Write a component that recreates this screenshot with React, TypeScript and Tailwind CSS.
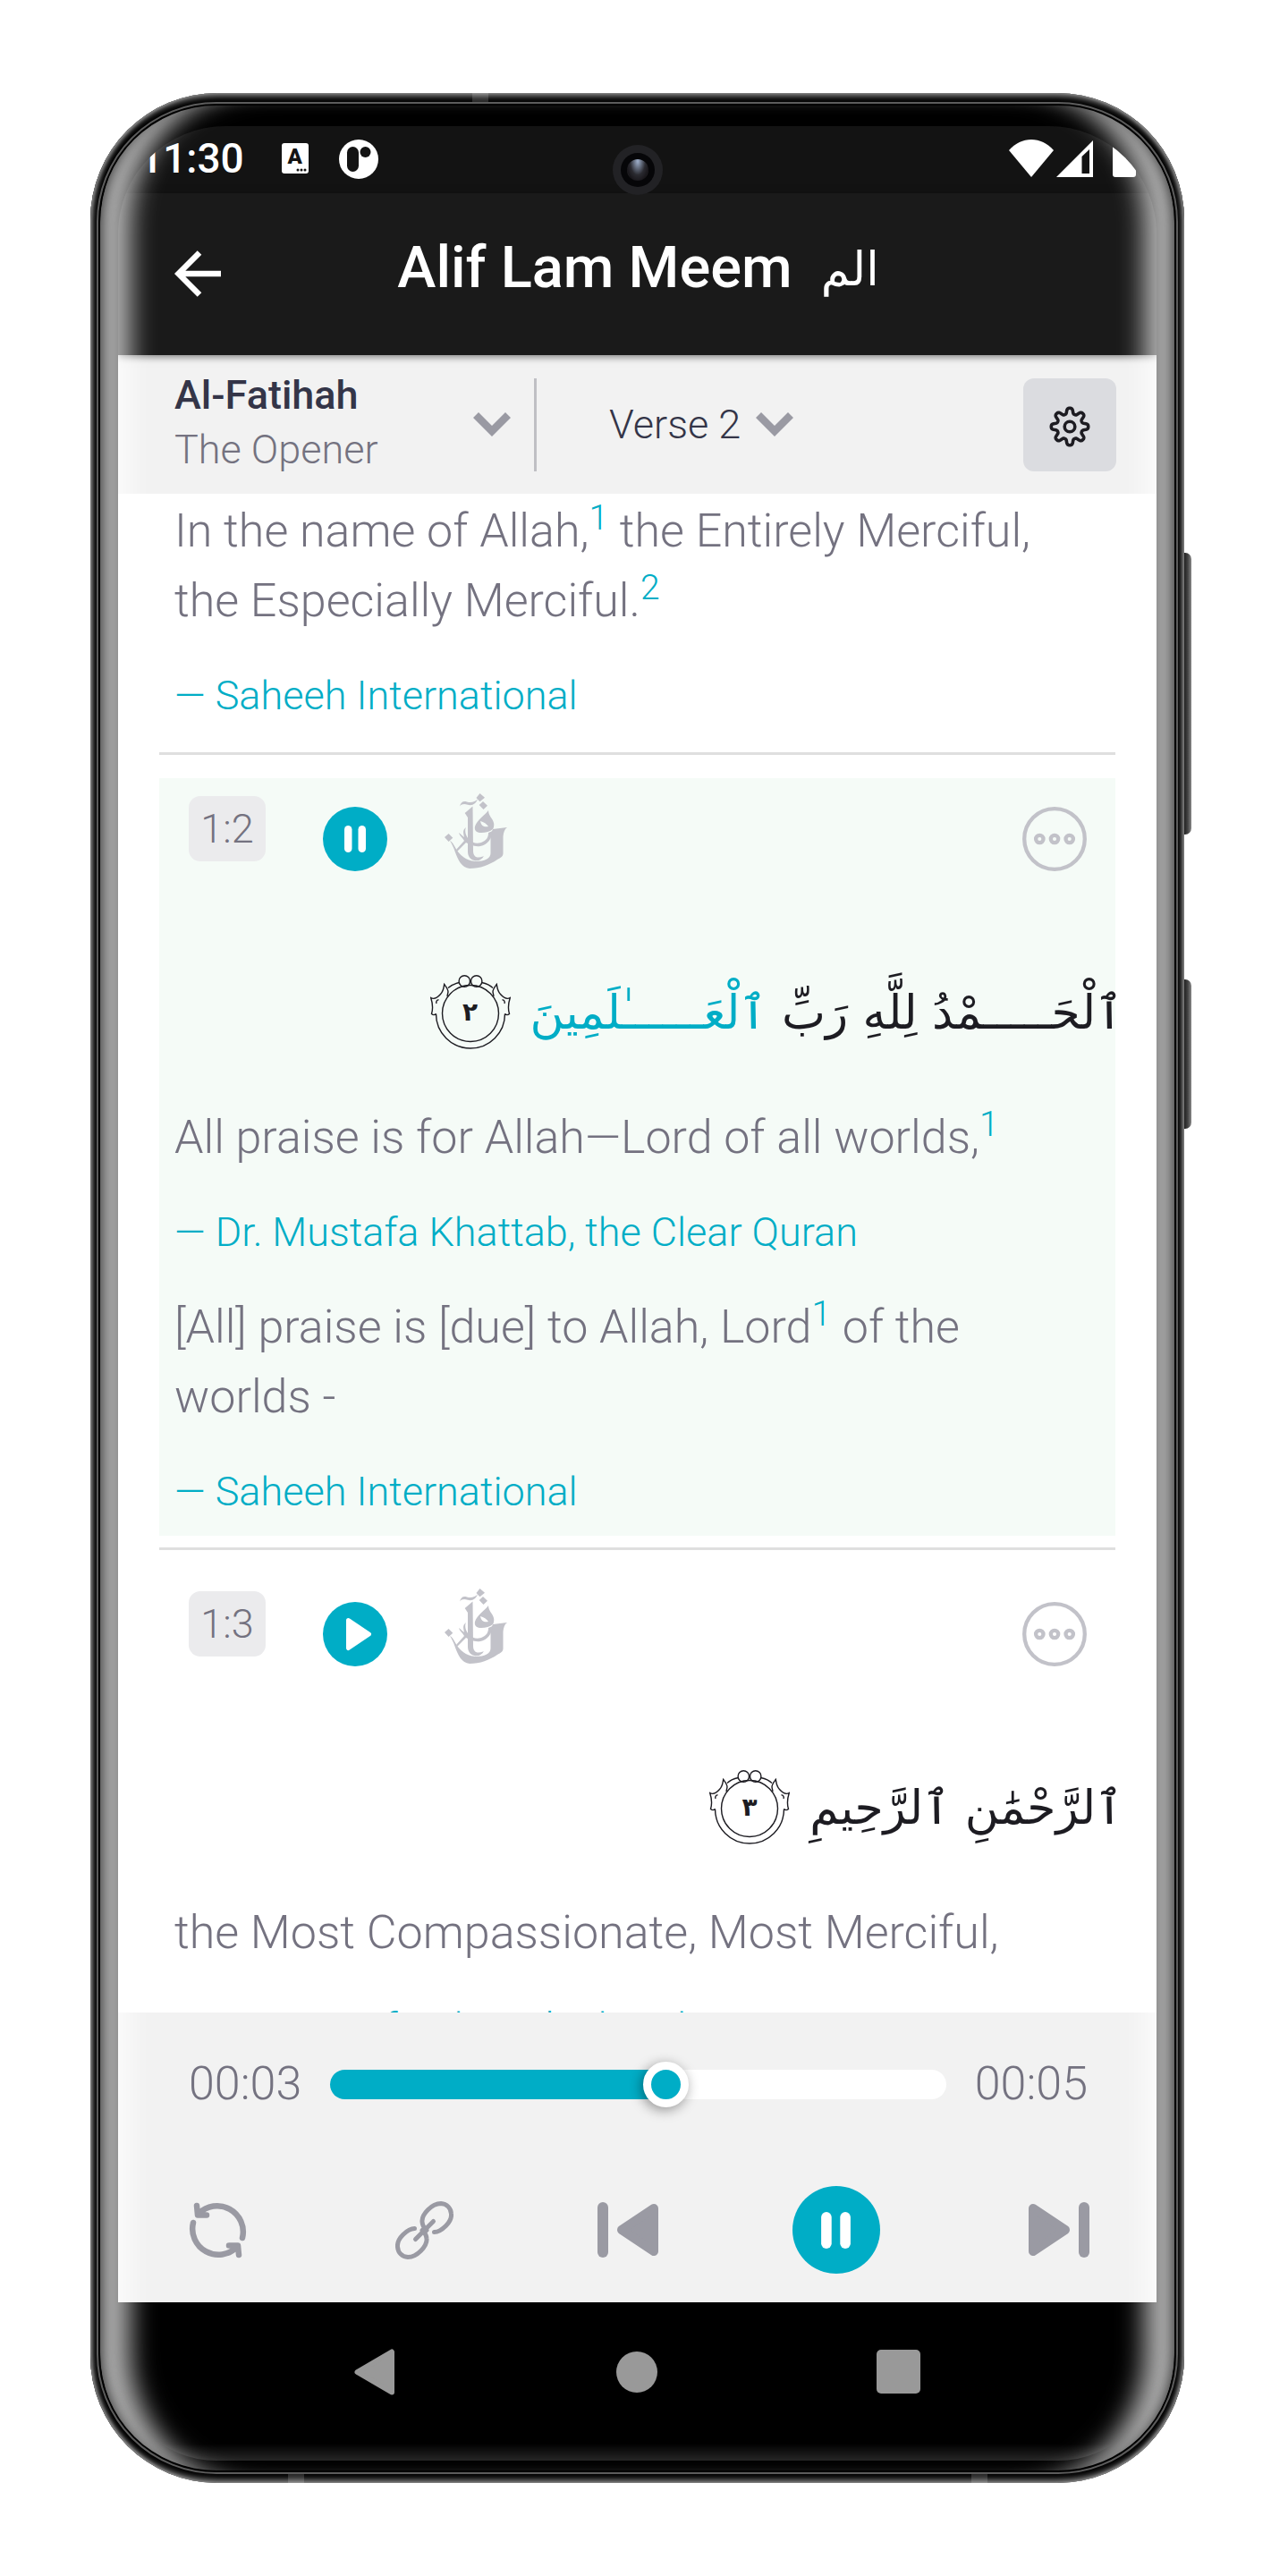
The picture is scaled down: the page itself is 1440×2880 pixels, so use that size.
import React, { useState } from "react";

const TRANSLATOR = "text-[45px] leading-[54px] font-light text-[#00adc6]";
const BODY = "text-[52px] leading-[78px] font-light text-[#747280]";

function Note({ n }: { n: number }) {
  return <sup className="text-[#00adc6]">{n}</sup>;
}

function Chevron() {
  return (
    <svg viewBox="0 0 42 27" className="w-[42px] h-[27px] shrink-0" aria-hidden="true">
      <path d="M3 3 21 21 39 3" fill="none" stroke="#9a9aa3" strokeWidth="8.5" />
    </svg>
  );
}

// Eight rounded teeth: the wave is flattened at its peaks and valleys.
function gearPath() {
  const pts: string[] = [];
  for (let i = 0; i < 240; i++) {
    const a = (i / 240) * Math.PI * 2;
    const r = 17.6 + 3.1 * (Math.tanh(1.7 * Math.cos(8 * a)) / Math.tanh(1.7));
    pts.push(`${(24 + r * Math.sin(a)).toFixed(2)} ${(24 - r * Math.cos(a)).toFixed(2)}`);
  }
  return `M${pts.join("L")}Z`;
}

function Gear() {
  return (
    <svg viewBox="0 0 48 48" className="mt-1 size-12" fill="none" stroke="#1d1c22" strokeWidth="3.6" strokeLinejoin="round" aria-hidden="true">
      <path d={gearPath()} />
      <circle cx="24" cy="24" r="5.8" />
    </svg>
  );
}

function Calligraphy() {
  return (
    <svg viewBox="0 0 70 84" className="w-[70px] h-[84px]" fill="#c2c2c9" aria-hidden="true">
      <path d="M39.5 0 45 4.7 39.5 9.3 35.5 5Z" />
      <path d="M43 9 48 13.7 43.5 18 38.7 13Z" />
      <path d="M4.6 45 9.3 49.7 4.6 54 0 49Z" />
      <path d="M17 14.5C18 10 21 8 25 9.5C30 11 34 9.5 37 6.5C35.5 11 31 14.5 26 12.8C22 11.5 19 12 17 14.5Z" />
      <path d="M22.7 22 31.5 14.5 32 64C32 69 34.5 72 38.5 71.5C41.5 71 43 70.5 44 70C42 74 38 76 33.5 75C28.5 74 26 70 26 65V27Z" />
      <path d="M49 19C45.5 24 36 30 34 37C33 42 36 44 41 44C46 44 51 42.5 54 40L70 38C67 40 66 44 65.5 48V67C65.5 71 62 72 59 74C50 80 40 84 28 84C19 83 15 74 12 66C10 60 8 56 6 53C9 54 11 59 14 64C20 72 27 76 36 76C44 76 51.5 73 51.5 67V44C54 41 56 37 55 33C54 28 49 25 49 19ZM40 31C44 32 47 34 49 37C45 38 41 37 40 31Z" fillRule="evenodd" />
      <path d="M24 38C22 42 24 48 27 51C31 56 38 57 43 54C47 52 49 49 49 44L54 42C53 50 48 58 40 59C33 60 28 57 24 55L14 65L13 63L22 53C20 49 17 48 16 44C19 46 20 48 22 49C21 44 20 41 24 38Z" />
    </svg>
  );
}

function Ornament({ digit }: { digit: string }) {
  const side = (
    <>
      <path d="M6.5 43.5C5.5 45 3 45 1.5 43.5C3.5 37 2.5 31 .7 25.5C4 27.5 8 25.5 11.5 21.5C15 18 15 14 15.7 10.5C17.5 13 20 15.5 20 19L19 24" />
      <path d="M7 32C6 29.5 8 27.500 9.5 28" />
      <path d="M20 14.5C23 11.5 28 9.500 32.500 8.500" />
    </>
  );
  return (
    <span className="relative flex w-[90px] h-[84px] shrink-0 items-center justify-center">
      <svg viewBox="0 0 90 84" className="absolute inset-0 w-full h-full" fill="none" stroke="#1d1c22" strokeWidth="1.4" aria-hidden="true">
        <circle cx="45" cy="43" r="31.5" />
        <path d="M6.5 43.5A38.5 38.5 0 1 0 83.5 43.5" />
        <circle cx="38.3" cy="7" r="6.2" />
        <circle cx="51.7" cy="7" r="6.2" />
        {side}
        <g transform="translate(90 0) scale(-1 1)">{side}</g>
      </svg>
      <span className="relative text-[28px] leading-9 font-bold">{digit}</span>
    </span>
  );
}

function Pause({ className }: { className: string }) {
  return (
    <svg viewBox="0 0 24 30" className={className} fill="currentColor" aria-hidden="true">
      <rect width="8.5" height="30" rx="4.25" />
      <rect x="15.5" width="8.5" height="30" rx="4.25" />
    </svg>
  );
}

function VerseControls({ id, playing }: { id: string; playing?: boolean }) {
  return (
    <div className="flex items-start pt-[17px] pl-[33px] pr-8">
      <span className="mt-[3px] flex w-[86px] h-[73px] items-center justify-center rounded-[13px] bg-[#ebebed] text-[45px] leading-[54px] font-light text-[#747280]">
        {id}
      </span>
      <button
        aria-label={playing ? "Pause verse" : "Play verse"}
        className="mt-[15px] ml-16 flex size-[72px] items-center justify-center rounded-full bg-[#00adc6] text-white"
      >
        {playing ? (
          <Pause className="w-6 h-[30px]" />
        ) : (
          <svg viewBox="0 0 30 38" className="ml-2 w-[30px] h-[38px]" fill="#fff" stroke="#fff" strokeWidth="5" strokeLinejoin="round" aria-hidden="true">
            <path d="M3.5 3.5 26.500 19 3.5 34.5Z" />
          </svg>
        )}
      </button>
      <button aria-label="Tafsir" className="ml-16">
        <Calligraphy />
      </button>
      <button aria-label="More" className="mt-[15px] ml-auto">
        <svg viewBox="0 0 72 72" className="size-[72px]" fill="none" stroke="#c2c2c9" strokeWidth="4.3" aria-hidden="true">
          <circle cx="36" cy="36" r="33.8" />
          <circle cx="19.3" cy="36" r="4.2" />
          <circle cx="36" cy="36" r="4.2" />
          <circle cx="52.7" cy="36" r="4.2" />
        </svg>
      </button>
    </div>
  );
}

function Arabic({ children, digit }: { children: React.ReactNode; digit: string }) {
  return (
    <div
      lang="ar"
      dir="rtl"
      className="mt-[88px] mb-[31px] -mr-2 flex h-[140px] items-center gap-[22px] whitespace-nowrap font-['DejaVu_Sans',sans-serif] text-[52px] leading-[120px] text-[#1d1c22]"
    >
      <p>{children}</p>
      <Ornament digit={digit} />
    </div>
  );
}

function StatusBar() {
  return (
    <div className="flex h-[75px] shrink-0 items-start bg-[#131313] pt-[15px] pl-6 pr-[23px] text-white">
      <span className="mt-[-6px] text-[46px] leading-[54px] font-medium">11:30</span>
      <span className="relative mt-1 ml-[42px] flex w-[30px] h-[34px] items-center justify-center rounded-[3px] bg-white pb-1 text-[24px] leading-none font-black text-[#131313]">
        A
        <svg viewBox="0 0 12 4" className="absolute bottom-0.5 right-0.5 w-3 h-1" fill="#131313" aria-hidden="true">
          <circle cx="2" cy="2" r="1.5" />
          <circle cx="6" cy="2" r="1.5" />
          <circle cx="10" cy="2" r="1.5" />
        </svg>
      </span>
      <svg viewBox="0 0 44 44" className="ml-[34px] size-[44px]" aria-hidden="true">
        <circle cx="22" cy="22" r="22" fill="#fff" />
        <rect x="9" y="8" width="13" height="28" rx="6.5" fill="#131313" />
        <circle cx="29.5" cy="14" r="6" fill="#131313" />
      </svg>
      <svg viewBox="0 0 50 42" className="ml-auto w-[50px] h-[42px]" fill="#fff" aria-hidden="true">
        <path d="M0 12C14-4 36-4 50 12L25 42Z" />
      </svg>
      <svg viewBox="0 0 41 42" className="ml-[3px] w-[41px] h-[42px]" aria-hidden="true">
        <path d="M41 1V42H0Z" fill="#fff" />
        <path d="M28.5 19 37 11V38H28.5Z" fill="#131313" />
      </svg>
      <span className="ml-[22px] w-[26px] h-[42px] rounded-[3px] bg-white" />
    </div>
  );
}

function Header() {
  return (
    <header className="relative z-10 flex h-[181px] shrink-0 items-center bg-[#1a1a1a] px-[63px] pb-4 text-white shadow-[0_2px_8px_rgba(0,0,0,0.5)]">
      <button aria-label="Back" className="mt-3.5">
        <svg viewBox="0 0 52 52" className="size-[52px]" fill="none" stroke="#fff" strokeWidth="6.5" aria-hidden="true">
          <path d="M28 2.5 4.5 26 28 49.5M4.5 26H52" />
        </svg>
      </button>
      <h1 className="mx-auto flex items-center gap-8 pr-[50px] text-[65px] leading-[76px] font-medium">
        Alif Lam Meem
        <span lang="ar" className="pt-1 font-['DejaVu_Sans',sans-serif] text-[52px] font-normal">الم</span>
      </h1>
    </header>
  );
}

function Toolbar() {
  return (
    <div className="flex h-[155px] shrink-0 items-center bg-[#f2f2f2] pl-[63px] pr-[45px]">
      <button aria-haspopup="listbox" className="flex w-[376px] items-center justify-between text-left text-[45px] leading-[61px]">
        <span className="flex flex-col pb-1.5">
          <span className="font-medium text-[#343548]">Al-Fatihah</span>
          <span className="font-light text-[#747280]">The Opener</span>
        </span>
        <Chevron />
      </button>
      <span className="ml-[26px] w-[3px] h-[104px] bg-[#bfbfc4]" />
      <label className="relative ml-[81px] flex items-center">
        <span className="sr-only">Verse</span>
        <select className="field-sizing-content appearance-none bg-transparent pr-[59px] text-[45px] leading-[54px] font-light text-[#343548]">
          <option>Verse 2</option>
          <option>Verse 3</option>
        </select>
        <span className="pointer-events-none absolute right-0">
          <Chevron />
        </span>
      </label>
      <button aria-label="Settings" className="ml-auto flex size-[104px] items-center justify-center rounded-[12px] bg-[#dbdce0]">
        <Gear />
      </button>
    </div>
  );
}

function Verses() {
  return (
    <main className="min-h-0 flex-1 overflow-hidden bg-white px-[46px]">
      <section className="flex flex-col gap-10 px-[17px] pt-[3px] pb-9">
        <p className={BODY}>
          In the name of Allah,<Note n={1} /> the Entirely Merciful, the Especially Merciful.<Note n={2} />
        </p>
        <p className={TRANSLATOR}>— Saheeh International</p>
      </section>
      <hr className="mb-[26px] border-t-[3px] border-[#dfdfdf]" />
      <section className="bg-[#f5fbf7] pb-[22px]">
        <VerseControls id="1:2" playing />
        <Arabic digit="٢">
          ٱلْحَـــــمْدُ لِلَّهِ رَبِّ <span className="text-[#00adc6]">ٱلْعَــــــٰلَمِينَ</span>
        </Arabic>
        <div className="flex flex-col gap-10 px-[17px]">
          <p className={BODY}>
            All praise is for Allah—Lord of all worlds,<Note n={1} />
          </p>
          <p className={TRANSLATOR}>— Dr. Mustafa Khattab, the Clear Quran</p>
          <p className={BODY}>
            [All] praise is [due] to Allah, Lord<Note n={1} /> of the worlds -
          </p>
          <p className={TRANSLATOR}>— Saheeh International</p>
        </div>
      </section>
      <hr className="mt-[13px] mb-[26px] border-t-[3px] border-[#dfdfdf]" />
      <section>
        <VerseControls id="1:3" />
        <Arabic digit="٣">ٱلرَّحْمَٰنِ ٱلرَّحِيمِ</Arabic>
        <div className="flex flex-col gap-10 px-[17px]">
          <p className={BODY}>the Most Compassionate, Most Merciful,</p>
          <p className={TRANSLATOR}>— Dr. Mustafa Khattab, the Clear Quran</p>
        </div>
      </section>
    </main>
  );
}

function SkipIcon({ flip }: { flip?: boolean }) {
  return (
    <svg viewBox="0 0 68 62" className={flip ? "w-[68px] h-[62px] -scale-x-100" : "w-[68px] h-[62px]"} fill="#9a9aa3" aria-hidden="true">
      <path d="M5 7 41 31 5 55Z" stroke="#9a9aa3" strokeWidth="10" strokeLinejoin="round" />
      <rect x="56" width="12" height="62" rx="6" />
    </svg>
  );
}

function Player() {
  const [position, setPosition] = useState(549);
  const fill = 3.7 + (position / 1000) * 92.6;
  return (
    <footer className="flex h-[324px] shrink-0 flex-col bg-[#f2f2f2] pl-[79px] pr-[75px]">
      <div className="flex items-center pt-[49px] pr-0.5 text-[52px] leading-[62px] font-light text-[#747280]">
        <span>00:03</span>
        <input
          type="range"
          aria-label="Seek"
          min={0}
          max={1000}
          value={position}
          onChange={(e) => setPosition(Number(e.target.value))}
          style={{ backgroundImage: `linear-gradient(to right, #00adc6 ${fill}%, #ffffff ${fill}%)` }}
          className="mx-8 h-[33px] min-w-0 flex-1 appearance-none rounded-full [&::-webkit-slider-thumb]:size-[51px] [&::-webkit-slider-thumb]:appearance-none [&::-webkit-slider-thumb]:rounded-full [&::-webkit-slider-thumb]:border-[9px] [&::-webkit-slider-thumb]:border-white [&::-webkit-slider-thumb]:bg-[#00adc6] [&::-webkit-slider-thumb]:shadow-[-2px_3px_14px_rgba(0,0,0,0.4)]"
        />
        <span>00:05</span>
      </div>
      <div className="mt-[83px] flex h-[98px] items-center justify-between">
        <button aria-label="Repeat" className="pr-4">
          <svg viewBox="0 0 65 65" className="size-[65px]" fill="none" stroke="#9a9aa3" strokeWidth="6.5" strokeLinecap="round" strokeLinejoin="round" aria-hidden="true">
            <path d="M11 14A29 29 0 0 1 60 41M9 5 10 15.5 20 15.5" />
            <path d="M54 51A29 29 0 0 1 5 24M56 60 55 49.5 45 49.5" />
          </svg>
        </button>
        <button aria-label="Copy link" className="pr-2.5">
          <svg viewBox="0 0 65 65" className="size-[65px]" fill="none" stroke="#9a9aa3" strokeWidth="5" strokeLinecap="round" strokeLinejoin="round" aria-hidden="true">
            <path d="M43.5 34.5C48 34.5 52 32 56.5 27.5C61 23 63 19 62.5 14C62 7.5 57.5 3 51 2.5C45 2.5 41 5 36.5 9.5C31.5 14.5 29.5 18 30 23C30.3 27 32 30 35 32.5" />
            <path d="M21.5 30.5C17 30.5 13 33 8.5 37.5C4 42 2 46 2.5 51C3 57.5 7.5 62 14 62.5C20 62.5 24 60 28.5 55.5C33.5 50.5 35.5 47 35 42C34.7 38 33 35 30 32.5" />
            <path d="M42.5 22.5 22.5 42.5" />
          </svg>
        </button>
        <button aria-label="Previous verse"><SkipIcon flip /></button>
        <button aria-label="Pause" className="flex size-[98px] items-center justify-center rounded-full bg-[#00adc6] text-white">
          <Pause className="w-[33px] h-[41px]" />
        </button>
        <button aria-label="Next verse" className="pl-4"><SkipIcon /></button>
      </div>
    </footer>
  );
}

function SystemNav() {
  return (
    <nav className="flex h-[177px] shrink-0 items-center justify-between rounded-b-[110px] bg-[linear-gradient(to_bottom,#000_158px,#262626_177px)] pb-[22px] pl-[264px] pr-[264px]">
      <button aria-label="Back">
        <svg viewBox="0 0 46 52" className="w-[46px] h-[52px]" fill="#999" stroke="#999" strokeWidth="6" strokeLinejoin="round" aria-hidden="true">
          <path d="M3.5 26 42 3.5V48.5Z" />
        </svg>
      </button>
      <button aria-label="Home" className="ml-0.5 size-[46px] rounded-full bg-[#999]" />
      <button aria-label="Recent apps" className="size-[49px] rounded-[5px] bg-[#999]" />
    </nav>
  );
}

export default function App() {
  return (
    <div className="flex h-screen bg-white pt-[104px] pb-[104px] pl-[101px] pr-[116px] font-[Roboto,sans-serif]">
      <div className="relative flex flex-1 min-w-0 rounded-[142px] bg-black px-[7px] py-[10px] shadow-[inset_0_7px_7px_-4px_#999,inset_0_-7px_7px_-4px_#999,inset_3px_0_3px_-1px_#777,inset_-3px_0_3px_-1px_#777,inset_8px_0_4px_-3px_#3a3a3a,inset_-8px_0_4px_-3px_#3a3a3a]">
        <span className="absolute top-0 left-[427px] w-[18px] h-[10px] bg-white/15" />
        <span className="absolute bottom-0 left-[221px] w-[18px] h-[10px] bg-white/15" />
        <span className="absolute bottom-0 right-[220px] w-[18px] h-[10px] bg-white/15" />
        <span className="absolute top-[514px] -right-2 w-2 h-[315px] rounded-r-[7px] bg-[linear-gradient(to_right,#222,#444_50%,#888)]" />
        <span className="absolute top-[991px] -right-2 w-2 h-[167px] rounded-r-[7px] bg-[linear-gradient(to_right,#222,#444_50%,#888)]" />
        <div className="relative flex flex-1 min-w-0 overflow-hidden rounded-[134px] border-2 border-[#5c5c5c] bg-black px-[22px] pt-[25px] pb-[13px]">
          <div className="flex flex-1 min-w-0 flex-col overflow-hidden rounded-t-[120px]">
            <StatusBar />
            <Header />
            <Toolbar />
            <Verses />
            <Player />
            <SystemNav />
          </div>
          <div className="pointer-events-none absolute inset-0.5 z-20 overflow-hidden rounded-[130px]">
            <div className="absolute inset-x-0 -inset-y-4 rounded-[148px] shadow-[inset_5px_0_14px_-2px_rgba(0,0,0,0.55),inset_-5px_0_14px_-2px_rgba(0,0,0,0.55),inset_40px_0_28px_-6px_rgba(255,255,255,0.68),inset_-40px_0_28px_-6px_rgba(255,255,255,0.68)]" />
          </div>
          <div className="absolute left-1/2 top-[46px] z-20 flex size-14 -translate-x-1/2 items-center justify-center rounded-full bg-[#222225]">
            <span className="flex size-[38px] items-center justify-center rounded-full bg-[#060608]">
              <span className="size-6 rounded-full bg-[radial-gradient(ellipse_at_50%_10%,#9fb0cc,#2a2a30_50%,#18161a_75%,#555)]" />
            </span>
          </div>
        </div>
      </div>
    </div>
  );
}
